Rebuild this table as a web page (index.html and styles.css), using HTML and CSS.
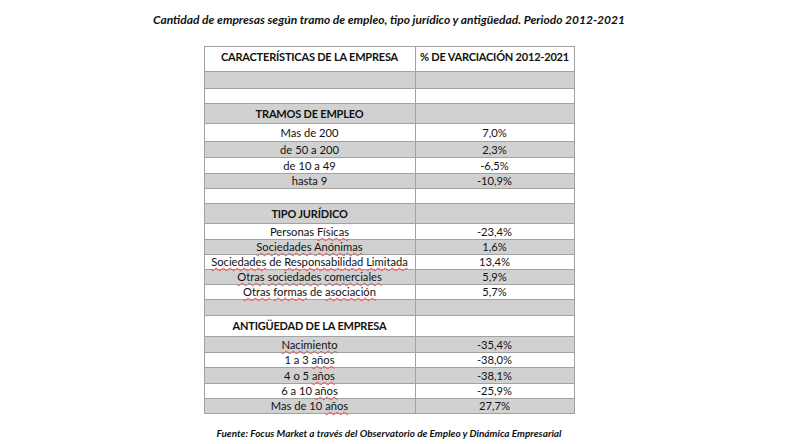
FILE: index.html
```html
<!DOCTYPE html>
<html lang="es">
<head>
<meta charset="utf-8">
<title>Cantidad de empresas</title>
<link rel="stylesheet" href="styles.css">
</head>
<body>
<div class="page">
  <p class="title">Cantidad de empresas según tramo de empleo, tipo jurídico y antigüedad. Periodo 2012-2021</p>
  <table class="data">
    <colgroup><col class="c1"><col class="c2"></colgroup>
    <tr class="head h25"><th>CARACTERÍSTICAS DE LA EMPRESA</th><th>% DE VARCIACIÓN 2012-2021</th></tr>
    <tr class="g h17"><td></td><td></td></tr>
    <tr class="h15"><td></td><td></td></tr>
    <tr class="g sec h20"><td>TRAMOS DE EMPLEO</td><td></td></tr>
    <tr class="h18"><td>Mas de 200</td><td>7,0%</td></tr>
    <tr class="g h16"><td>de 50 a 200</td><td>2,3%</td></tr>
    <tr class="h16"><td>de 10 a 49</td><td>-6,5%</td></tr>
    <tr class="g h15"><td>hasta 9</td><td>-10,9%</td></tr>
    <tr class="h15"><td></td><td></td></tr>
    <tr class="g sec h20"><td>TIPO JURÍDICO</td><td></td></tr>
    <tr class="h16"><td>Personas <span class="sp">Físicas</span></td><td>-23,4%</td></tr>
    <tr class="g h15"><td><span class="sp">Sociedades</span> <span class="sp">Anónimas</span></td><td>1,6%</td></tr>
    <tr class="h15"><td><span class="sp">Sociedades</span> de <span class="sp">Responsabilidad</span> <span class="sp">Limitada</span></td><td>13,4%</td></tr>
    <tr class="g h15"><td><span class="sp">Otras</span> <span class="sp">sociedades</span> <span class="sp">comerciales</span></td><td>5,9%</td></tr>
    <tr class="h15"><td><span class="sp">Otras</span> <span class="sp">formas</span> de <span class="sp">asociación</span></td><td>5,7%</td></tr>
    <tr class="g h16"><td></td><td></td></tr>
    <tr class="sec h21"><td>ANTIGÜEDAD DE LA EMPRESA</td><td></td></tr>
    <tr class="g h16"><td><span class="sp">Nacimiento</span></td><td>-35,4%</td></tr>
    <tr class="h15"><td>1 a 3 <span class="sp">años</span></td><td>-38,0%</td></tr>
    <tr class="g h16"><td>4 o 5 <span class="sp">años</span></td><td>-38,1%</td></tr>
    <tr class="h15"><td>6 a 10 <span class="sp">años</span></td><td>-25,9%</td></tr>
    <tr class="g h15"><td>Mas de 10 <span class="sp">años</span></td><td>27,7%</td></tr>
  </table>
  <p class="source">Fuente: Focus Market a través del Observatorio de Empleo y Dinámica Empresarial</p>
</div>
</body>
</html>
```
FILE: styles.css
```css
html, body {
  margin: 0;
  padding: 0;
  background: #ffffff;
}
.page {
  width: 778px;
  display: flex;
  flex-direction: column;
  align-items: center;
  font-family: Lato, "Open Sans", sans-serif;
  color: #111111;
}
.title {
  margin: 13px 0 0;
  font-size: 12px;
  font-weight: 700;
  font-style: italic;
  line-height: 14px;
}
.data {
  margin-top: 19px;
  border-collapse: collapse;
  table-layout: fixed;
  width: 370px;
  font-size: 11.2px;
  line-height: 13px;
}
.c1 { width: 211px; }
.c2 { width: 159px; }
.data th, .data td {
  border: 1px solid #a2a2a2;
  padding: 0 1px 1px;
  text-align: center;
  vertical-align: middle;
  white-space: nowrap;
}
.data th {
  font-weight: 700;
  vertical-align: top;
  padding-top: 3px;
  font-size: 11px;
  letter-spacing: -0.2px;
}
.g td { background: #d1d1d1; }
.sec td {
  font-weight: 700;
  vertical-align: top;
  padding-top: 3px;
  font-size: 11px;
  letter-spacing: -0.2px;
}
.h25 { height: 25px; }
.h21 { height: 21px; }
.h20 { height: 20px; }
.h18 { height: 18px; }
.h17 { height: 17px; }
.h16 { height: 16px; }
.h15 { height: 15px; }
.sp {
  text-decoration-line: underline;
  text-decoration-style: wavy;
  text-decoration-color: #e8555a;
  text-decoration-thickness: 1px;
  text-underline-offset: 1px;
}
.source {
  margin: 13px 0 0;
  font-size: 10px;
  font-weight: 700;
  font-style: italic;
  line-height: 12px;
}
```
